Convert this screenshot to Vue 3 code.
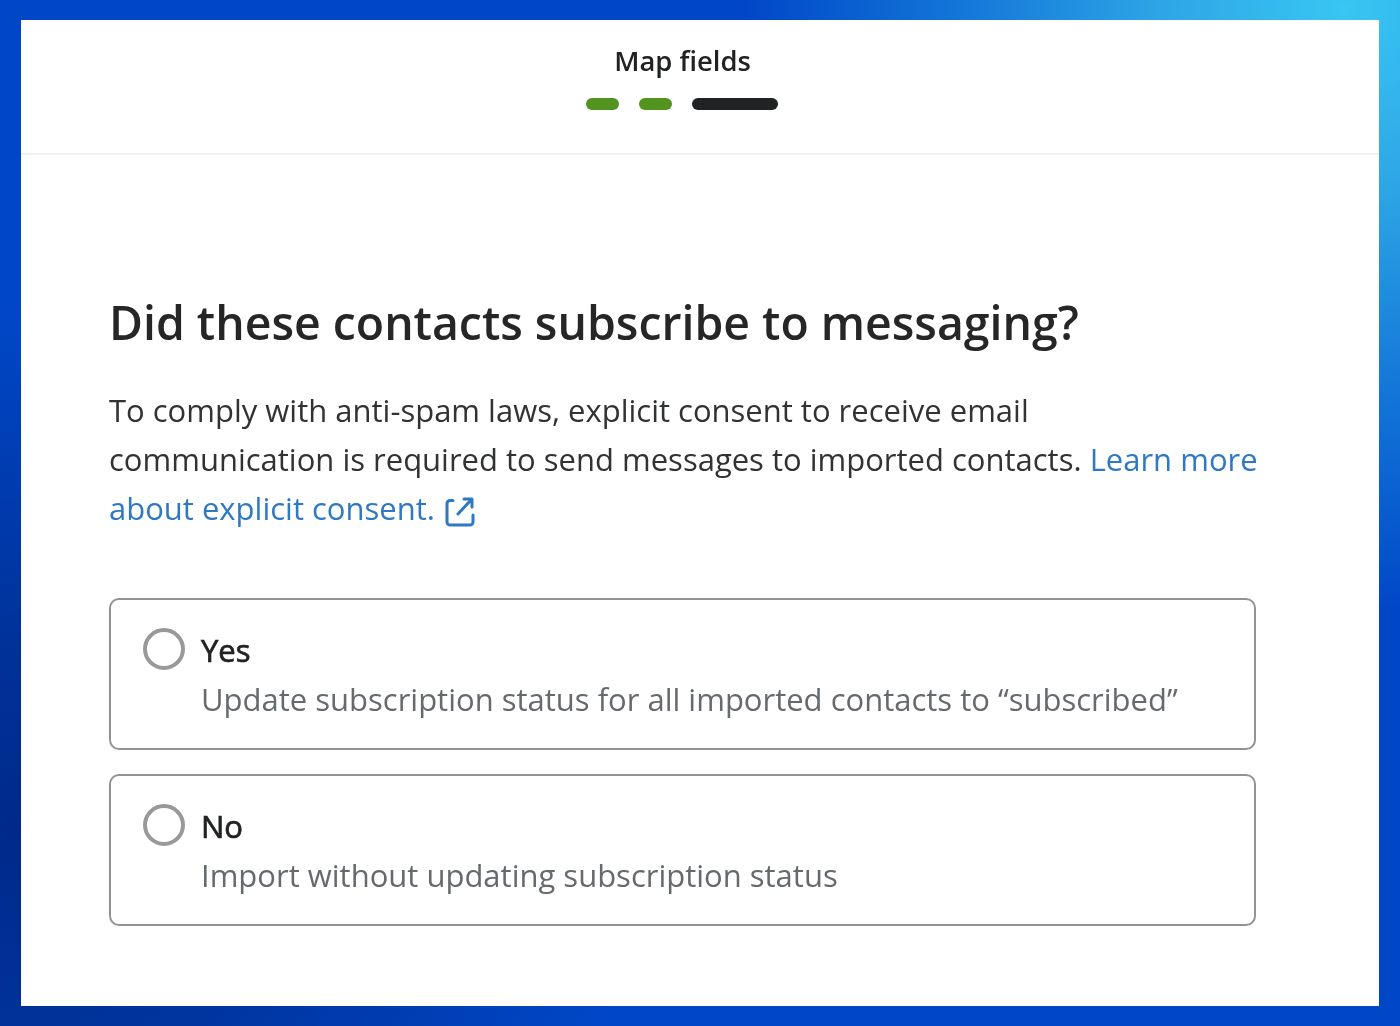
<script setup>
const options = [
  { title: 'Yes', text: 'Update subscription status for all imported contacts to “subscribed”' },
  { title: 'No', text: 'Import without updating subscription status' }
]
</script>

<template>
  <div class="page">
    <div class="card">
      <header class="head">
        <div class="step">Map fields</div>
        <div class="bars">
          <span class="bar done"></span>
          <span class="bar done"></span>
          <span class="bar current"></span>
        </div>
      </header>
      <main class="body">
        <h1>Did these contacts subscribe to messaging?</h1>
        <p class="lead">
          To comply with anti-spam laws, explicit consent to receive email<br />
          communication is required to send messages to imported contacts.
          <a class="link">Learn more<br />about explicit consent.<svg class="ext" viewBox="0 0 30 30" fill="none" stroke="currentColor" stroke-width="3" stroke-linecap="round" stroke-linejoin="round">
              <path d="M8 3.5H5a3 3 0 0 0-3 3V25a3 3 0 0 0 3 3h20a3 3 0 0 0 3-3v-7" />
              <path d="M13 17 26 3M19 2h8v8" />
            </svg>
          </a>
        </p>
        <div class="options">
          <label v-for="o in options" :key="o.title" class="option">
            <span class="radio"></span>
            <span class="copy">
              <span class="name">{{ o.title }}</span>
              <span class="desc">{{ o.text }}</span>
            </span>
          </label>
        </div>
      </main>
    </div>
  </div>
</template>

<style>
html, body { margin: 0; }
</style>

<style scoped>
.page {
  width: 1400px;
  height: 1026px;
  box-sizing: border-box;
  padding: 20px 21px;
  background:
    radial-gradient(circle 600px at 1345px 10px, #38c6f3 0%, #2ea6e6 30%, #1479d9 62%, rgba(0,71,200,0) 100%),
    radial-gradient(ellipse 640px 520px at 20px 830px, #00298a 0%, #00339c 40%, rgba(0,71,200,0) 100%),
    #0047c8;
  font-family: "Open Sans", "Noto Sans", sans-serif;
}
.card {
  height: 986px;
  background: #fff;
}
.head {
  height: 135px;
  box-sizing: border-box;
  border-bottom: 2px solid #f0f0f0;
  display: flex;
  flex-direction: column;
  align-items: center;
  padding: 23px 35px 0 0;
  filter: blur(0.3px);
}
.step {
  font-size: 27.4px;
  line-height: 36px;
  font-weight: 600;
  color: #202223;
}
.bars {
  display: flex;
  gap: 20px;
  margin: 19px 1px 0 0;
}
.bar {
  display: block;
  height: 12px;
  border-radius: 6px;
}
.done { width: 33px; background: #53931f; }
.current { width: 86px; background: #202223; }
.body {
  padding: 0 0 0 88px;
  filter: blur(0.3px);
}
h1 {
  margin: 137px 0 0;
  font-size: 46.4px;
  line-height: 60px;
  font-weight: 600;
  color: #262626;
}
.lead {
  margin: 34px 0 0;
  font-size: 31px;
  line-height: 49px;
  color: #303233;
}
.link {
  color: #2f79c4;
}
.ext {
  width: 30px;
  height: 30px;
  vertical-align: -7px;
  margin-left: 10px;
}
.options {
  margin-top: 65px;
  width: 1147px;
  display: flex;
  flex-direction: column;
  gap: 24px;
}
.option {
  box-sizing: border-box;
  height: 152px;
  border: 2px solid #939393;
  border-radius: 10px;
  display: flex;
  padding: 28px 32px;
  gap: 16px;
}
.radio {
  flex: none;
  width: 42px;
  height: 42px;
  box-sizing: border-box;
  border: 4px solid #999;
  border-radius: 50%;
}
.copy {
  display: flex;
  flex-direction: column;
  margin-top: -2px;
}
.name {
  font-size: 31px;
  line-height: 49px;
  -webkit-text-stroke: 0.7px #202223;
  color: #202223;
}
.desc {
  font-size: 31px;
  line-height: 49px;
  color: #666a6e;
}
</style>
